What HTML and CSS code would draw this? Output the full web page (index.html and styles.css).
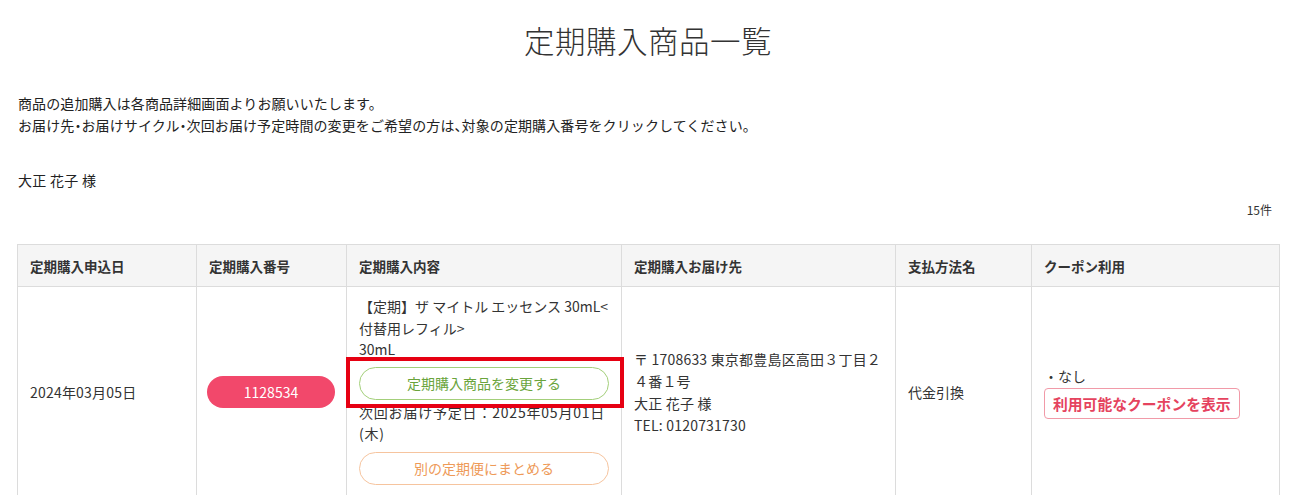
FILE: index.html
```html
<!DOCTYPE html>
<html lang="ja">
<head>
<meta charset="utf-8">
<title>定期購入商品一覧</title>
<link rel="stylesheet" href="styles.css">
</head>
<body>
<main class="page">
  <h1 class="title">定期購入商品一覧</h1>
  <p class="intro">商品の追加購入は各商品詳細画面よりお願いいたします。<br>お届け先・お届けサイクル・次回お届け予定時間の変更をご希望の方は、対象の定期購入番号をクリックしてください。</p>
  <p class="customer">大正 花子 様</p>
  <p class="count">15件</p>
  <table class="list">
    <colgroup>
      <col class="c1"><col class="c2"><col class="c3"><col class="c4"><col class="c5"><col class="c6">
    </colgroup>
    <thead>
      <tr>
        <th>定期購入申込日</th>
        <th>定期購入番号</th>
        <th>定期購入内容</th>
        <th>定期購入お届け先</th>
        <th>支払方法名</th>
        <th>クーポン利用</th>
      </tr>
    </thead>
    <tbody>
      <tr>
        <td class="date">2024年03月05日</td>
        <td class="num-cell"><a class="pill" href="#">1128534</a></td>
        <td class="content-cell">
          <div class="item-name">【定期】ザ マイトル エッセンス 30mL&lt;付替用レフィル&gt;</div>
          <div>30mL</div>
          <div class="mark-wrap">
            <a class="btn btn-green" href="#">定期購入商品を変更する</a>
            <span class="mark"></span>
          </div>
          <div class="next-date">次回お届け予定日：2025年05月01日(木)</div>
          <a class="btn btn-orange" href="#">別の定期便にまとめる</a>
        </td>
        <td class="addr">〒 1708633 東京都豊島区高田３丁目２４番１号<br>大正 花子 様<br>TEL: 0120731730</td>
        <td>代金引換</td>
        <td>
          <div>・なし</div>
          <a class="coupon" href="#">利用可能なクーポンを表示</a>
        </td>
      </tr>
    </tbody>
  </table>
</main>
</body>
</html>
```

FILE: styles.css
```css
* { box-sizing: border-box; }
html, body { margin: 0; padding: 0; background: #fff; }
body {
  font-family: "Noto Sans CJK JP", "Noto Sans", sans-serif;
  color: #333;
  font-size: 14px;
}
.page { padding: 20px 16px 0 17px; }
.title {
  margin: 0;
  text-align: center;
  font-size: 30.5px;
  line-height: 40px;
  font-weight: 300;
  color: #333;
  letter-spacing: 0.5px;
}
.intro {
  margin: 32px 0 0 1px;
  font-size: 14px;
  line-height: 22px;
  letter-spacing: 0.1px;
  font-feature-settings: "halt";
  color: #222;
}
.customer {
  margin: 33px 0 0 1px;
  line-height: 22px;
  color: #222;
  letter-spacing: 0.3px;
}
.count {
  margin: 9px 7px 0 0;
  text-align: right;
  font-size: 12px;
  line-height: 20px;
}
.list {
  margin-top: 24px;
  width: 1262px;
  border-collapse: collapse;
  table-layout: fixed;
}
.c1 { width: 179px; }
.c2 { width: 150px; }
.c3 { width: 275px; }
.c4 { width: 274px; }
.c5 { width: 136px; }
.c6 { width: 248px; }
.list th, .list td {
  border: 1px solid #dcdcdc;
  padding: 0 12px;
  text-align: left;
  vertical-align: middle;
}
.list th {
  background: #f5f5f5;
  height: 42px;
  font-size: 13.5px;
  font-weight: 700;
  color: #333;
}
.list td {
  line-height: 22px;
  color: #333;
}
.date { letter-spacing: 0.2px; }
.addr { letter-spacing: 0.2px; }
.num-cell { padding: 0 10px 0 10px !important; }
.pill {
  display: block;
  width: 128px;
  height: 32px;
  line-height: 32px;
  border-radius: 16px;
  background: #f2486b;
  color: #fff;
  text-align: center;
  text-decoration: none;
  font-size: 14px;
}
.content-cell { padding: 9px 12px 13px 12px !important; }
.item-name, .content-cell > div { line-height: 21.5px; }
.next-date { letter-spacing: 0.8px; }
.mark-wrap { position: relative; margin: 6px 0 2px; }
.mark {
  position: absolute;
  top: -10px;
  left: -13px;
  right: -15px;
  bottom: -8px;
  border: 4px solid #e60012;
  pointer-events: none;
}
.btn {
  display: block;
  height: 33px;
  line-height: 31px;
  border-radius: 17px;
  text-align: center;
  text-decoration: none;
  font-size: 14px;
  background: #fff;
}
.btn-green { border: 1px solid #a3cf7a; color: #6aa43c; }
.btn-orange { border: 1px solid #f6c49e; color: #ee9a58; margin-top: 7px; }
.coupon {
  display: inline-block;
  margin-top: 1px;
  height: 31px;
  line-height: 29px;
  padding: 0 8px;
  border: 1px solid #f19aa8;
  border-radius: 4px;
  color: #e5435e;
  font-weight: 700;
  font-size: 14.8px;
  text-decoration: none;
}
```
